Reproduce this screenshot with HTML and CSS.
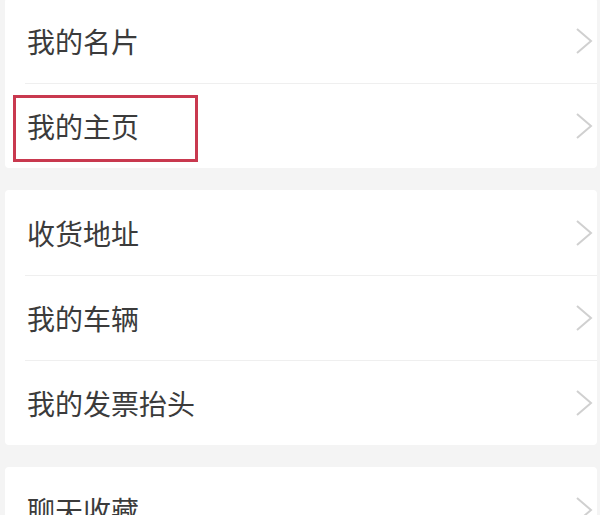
FILE: index.html
```html
<!DOCTYPE html>
<html lang="zh">
<head>
  <meta charset="UTF-8">
  <meta name="viewport" content="width=device-width, initial-scale=1.0">
  <title>我的</title>
  <link rel="stylesheet" href="styles.css">
</head>
<body>
  <div class="page">

    <div class="card first-card">
      <div class="row">
        <div class="row-inner">
          <span class="label">我的名片</span>
          <svg class="arrow" viewBox="0 0 20 28"><polyline points="3,2 17,14 3,26"/></svg>
        </div>
      </div>
      <div class="row">
        <div class="row-inner">
          <span class="label marked">我的主页</span>
          <svg class="arrow" viewBox="0 0 20 28"><polyline points="3,2 17,14 3,26"/></svg>
        </div>
      </div>
    </div>

    <div class="card">
      <div class="row">
        <div class="row-inner">
          <span class="label">收货地址</span>
          <svg class="arrow" viewBox="0 0 20 28"><polyline points="3,2 17,14 3,26"/></svg>
        </div>
      </div>
      <div class="row">
        <div class="row-inner">
          <span class="label">我的车辆</span>
          <svg class="arrow" viewBox="0 0 20 28"><polyline points="3,2 17,14 3,26"/></svg>
        </div>
      </div>
      <div class="row">
        <div class="row-inner">
          <span class="label">我的发票抬头</span>
          <svg class="arrow" viewBox="0 0 20 28"><polyline points="3,2 17,14 3,26"/></svg>
        </div>
      </div>
    </div>

    <div class="card">
      <div class="row">
        <div class="row-inner">
          <span class="label">聊天收藏</span>
          <svg class="arrow" viewBox="0 0 20 28"><polyline points="3,2 17,14 3,26"/></svg>
        </div>
      </div>
    </div>

  </div>
</body>
</html>
```

FILE: styles.css
```css
body {
  margin: 0;
  padding: 0;
  overflow: hidden;
  background: #f4f4f4;
  font-family: "Noto Sans CJK SC", "Noto Sans", sans-serif;
}

.page {
  display: flex;
  flex-direction: column;
  gap: 22px;
  padding: 0 3px 0 5px;
}

.card {
  background: #fff;
  border-radius: 4px;
}

.first-card {
  margin-top: -2px;
}

.row {
  padding-left: 20px;
}

.row-inner {
  box-sizing: border-box;
  height: 85px;
  display: flex;
  align-items: center;
  justify-content: space-between;
  padding: 0 3px 0 2px;
  border-top: 1px solid #efefef;
}

.row:first-child .row-inner {
  border-top: none;
}

.label {
  font-size: 28px;
  color: #3b3b3b;
}

.marked {
  display: inline-flex;
  align-items: center;
  height: 56px;
  margin: 5px 0 0 -14px;
  padding: 0 56px 5px 11px;
  border: 3px solid #c9394f;
}

.arrow {
  width: 20px;
  height: 28px;
}

.arrow polyline {
  fill: none;
  stroke: #d0d0d0;
  stroke-width: 2;
}
```
